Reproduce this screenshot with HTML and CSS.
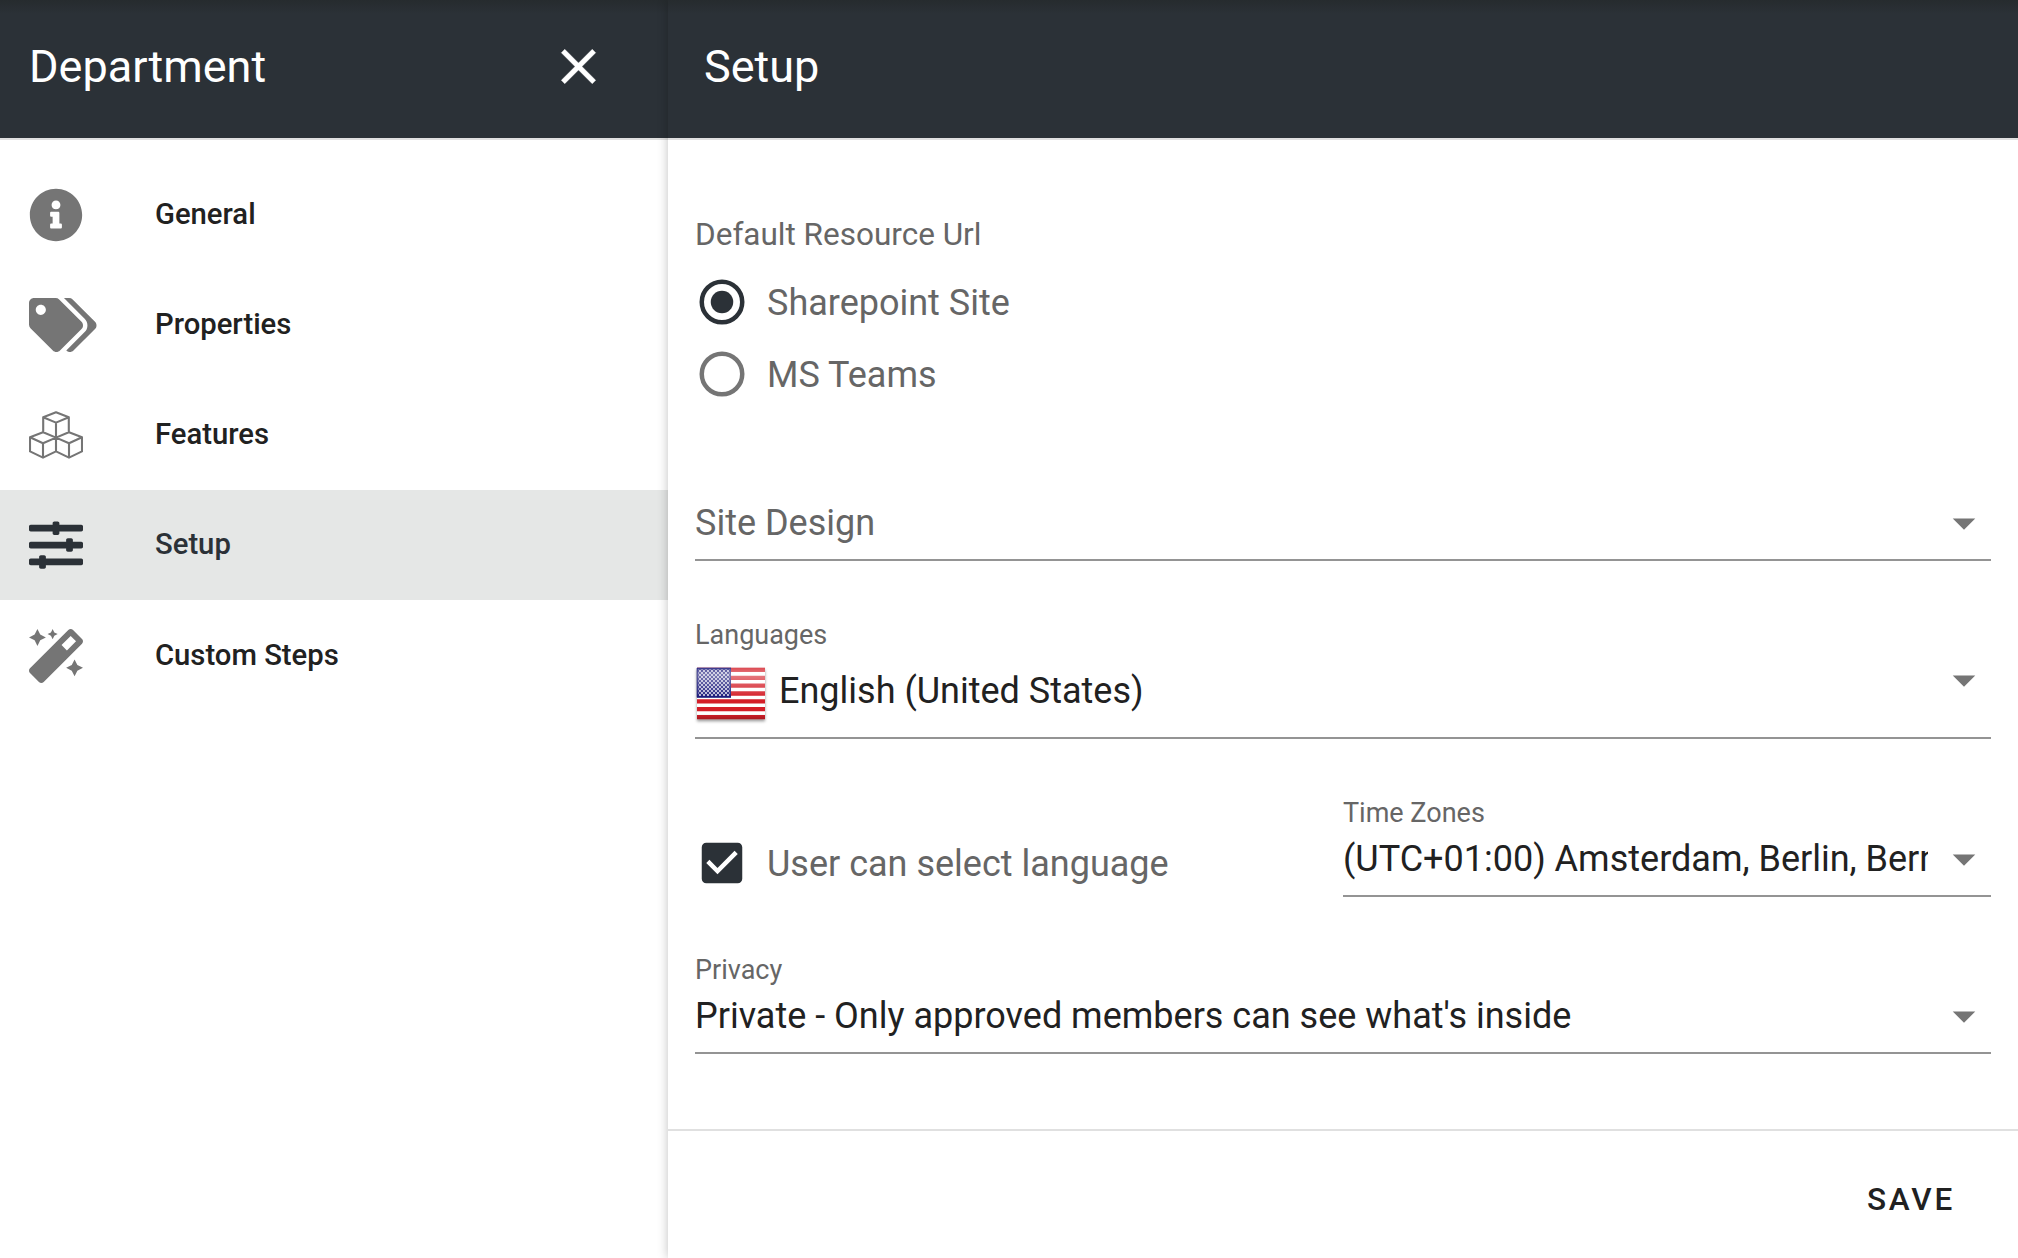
FILE: index.html
```html
<!DOCTYPE html>
<html lang="en">
<head>
<meta charset="utf-8">
<title>Department – Setup</title>
<link rel="stylesheet" href="styles.css">
</head>
<body>
<div class="app">
  <aside class="sidebar">
    <header class="bar">
      <h1 class="title">Department</h1>
      <button class="close" aria-label="Close"><svg viewBox="0 0 24 24"><path d="M19,6.41L17.59,5L12,10.59L6.41,5L5,6.41L10.59,12L5,17.59L6.41,19L12,13.41L17.59,19L19,17.59L13.41,12L19,6.41Z"/></svg></button>
    </header>
    <nav class="menu">
      <a class="item"><span class="icon"><svg viewBox="0 0 512 512" width="54"><path d="M256 8C119.043 8 8 119.083 8 256c0 136.997 111.043 248 248 248s248-111.003 248-248C504 119.083 392.957 8 256 8zm0 110c23.196 0 42 18.804 42 42s-18.804 42-42 42-42-18.804-42-42 18.804-42 42-42zm56 254c0 6.627-5.373 12-12 12h-88c-6.627 0-12-5.373-12-12v-24c0-6.627 5.373-12 12-12h12v-64h-12c-6.627 0-12-5.373-12-12v-24c0-6.627 5.373-12 12-12h64c6.627 0 12 5.373 12 12v100h12c6.627 0 12 5.373 12 12v24z"/></svg></span><span class="name">General</span></a>
      <a class="item"><span class="icon"><svg viewBox="0 0 640 512" width="67.5"><path d="M497.941 225.941L286.059 14.059A48 48 0 0 0 252.118 0H48C21.49 0 0 21.49 0 48v204.118a48 48 0 0 0 14.059 33.941l211.882 211.882c18.744 18.745 49.136 18.746 67.882 0l204.118-204.118c18.745-18.745 18.745-49.137 0-67.882zM112 160c-26.51 0-48-21.49-48-48s21.49-48 48-48 48 21.49 48 48-21.49 48-48 48zm513.941 133.823L421.823 497.941c-18.745 18.745-49.137 18.745-67.882 0l-.36-.36L527.64 323.522c16.999-16.999 26.362-39.6 26.362-63.64s-9.362-46.641-26.362-63.64L331.397 0h48.721a48 48 0 0 1 33.941 14.059l211.882 211.882c18.745 18.745 18.745 49.137 0 67.882z"/></svg></span><span class="name">Properties</span></a>
      <a class="item"><span class="icon"><svg viewBox="0 0 54 54" width="54"><path class="outline" d="M27 4.3L39.8 9.2V24.2L27 29.6L14.2 24.2V9.2ZM14.2 9.2L27 14.6L39.8 9.2M27 14.6V29.6M14 24.2L1 29.2V43.4L14 49.6L27 43.4V29.6M1 29.2L14 35.2L27 29.6L40 35.2L53 29.2M14 35.2V49.6M40 24.2L53 29.2V43.4L40 49.6L27 43.4M40 35.2V49.6"/></svg></span><span class="name">Features</span></a>
      <a class="item active"><span class="icon"><svg viewBox="0 0 512 512" width="54"><path d="M496 384H160v-16c0-8.800-7.200-16-16-16h-32c-8.800 0-16 7.200-16 16v16H16c-8.800 0-16 7.200-16 16v32c0 8.800 7.200 16 16 16h80v16c0 8.800 7.200 16 16 16h32c8.800 0 16-7.200 16-16v-16h336c8.800 0 16-7.200 16-16v-32c0-8.800-7.200-16-16-16zm0-160h-80v-16c0-8.800-7.200-16-16-16h-32c-8.800 0-16 7.200-16 16v16H16c-8.800 0-16 7.200-16 16v32c0 8.800 7.200 16 16 16h336v16c0 8.800 7.200 16 16 16h32c8.800 0 16-7.200 16-16v-16h80c8.800 0 16-7.200 16-16v-32c0-8.800-7.200-16-16-16zm0-160H288V48c0-8.800-7.200-16-16-16h-32c-8.800 0-16 7.200-16 16v16H16C7.200 64 0 71.200 0 80v32c0 8.800 7.200 16 16 16h208v16c0 8.800 7.200 16 16 16h32c8.800 0 16-7.200 16-16v-16h208c8.800 0 16-7.200 16-16V80c0-8.800-7.200-16-16-16z"/></svg></span><span class="name">Setup</span></a>
      <a class="item"><span class="icon"><svg viewBox="0 0 512 512" width="54"><path d="M224 96l16-32 32-16-32-16-16-32-16 32-32 16 32 16 16 32zM80 160l26.660-53.330L160 80l-53.340-26.670L80 0 53.340 53.330 0 80l53.340 26.670L80 160zm352 128l-26.660 53.330L352 368l53.340 26.670L432 448l26.660-53.330L512 368l-53.340-26.670L432 288zm70.620-193.770L417.770 9.380C411.530 3.120 403.340 0 395.150 0c-8.190 0-16.380 3.120-22.630 9.380L9.380 372.520c-12.500 12.500-12.500 32.760 0 45.250l84.850 84.850c6.250 6.250 14.440 9.370 22.620 9.370 8.190 0 16.380-3.120 22.630-9.370l363.140-363.150c12.500-12.480 12.500-32.750 0-45.240zM359.450 203.460l-50.910-50.910 86.600-86.600 50.910 50.910-86.600 86.600z"/></svg></span><span class="name">Custom Steps</span></a>
    </nav>
  </aside>
  <main class="panel">
    <header class="bar bar-panel"><h2 class="title">Setup</h2></header>
    <form class="form">
      <div class="legend">Default Resource Url</div>
      <label class="choice on"><svg viewBox="0 0 24 24"><circle class="ring" cx="12" cy="12" r="9"/><circle cx="12" cy="12" r="5"/></svg><span>Sharepoint Site</span></label>
      <label class="choice"><svg viewBox="0 0 24 24"><circle class="ring" cx="12" cy="12" r="9"/></svg><span>MS Teams</span></label>

      <div class="field field-design">
        <div class="value placeholder"><span class="text">Site Design</span><svg class="arrow" viewBox="0 0 24 24"><path d="M7,10L12,15L17,10H7Z"/></svg></div>
      </div>

      <div class="field field-language">
        <div class="label">Languages</div>
        <div class="value">
          <svg class="flag" viewBox="0 0 72 56">
            <defs>
              <linearGradient id="fade" x1="0" y1="0" x2="0" y2="1"><stop offset="0" stop-color="#fff" stop-opacity=".2"/><stop offset=".12" stop-color="#fff" stop-opacity=".42"/><stop offset=".5" stop-color="#fff" stop-opacity=".1"/><stop offset=".56" stop-color="#fff" stop-opacity="0"/><stop offset=".9" stop-color="#000" stop-opacity="0"/><stop offset="1" stop-color="#000" stop-opacity=".2"/></linearGradient>
              <pattern id="stars" width="4" height="4" patternUnits="userSpaceOnUse"><circle cx="1" cy="1" r=".9" fill="#fff"/><circle cx="3" cy="3" r=".9" fill="#fff"/></pattern>
            </defs>
            <rect x="2" y="2" width="68" height="51" fill="#fff"/>
            <path d="M2 3.960H70M2 11.810H70M2 19.650H70M2 27.500H70M2 35.350H70M2 43.190H70M2 51.040H70" stroke="#d41e28" stroke-width="4.300"/>
            <rect x="2" y="2" width="34" height="29.500" fill="#1d1c7c"/>
            <rect x="3.500" y="3.500" width="31" height="26.500" fill="url(#stars)"/>
            <rect x="2" y="2" width="68" height="51" fill="url(#fade)"/>
            <path d="M36 2H2V31.500H36" fill="none" stroke="#1d1c7c" stroke-opacity=".6"/>
          </svg>
          <span class="text">English (United States)</span><svg class="arrow" viewBox="0 0 24 24"><path d="M7,10L12,15L17,10H7Z"/></svg></div>
      </div>

      <div class="columns">
        <label class="choice check"><svg viewBox="0 0 24 24"><path d="M10,17L5,12L6.41,10.58L10,14.17L17.59,6.58L19,8M19,3H5C3.89,3 3,3.89 3,5V19A2,2 0 0,0 5,21H19A2,2 0 0,0 21,19V5C21,3.89 20.1,3 19,3Z"/></svg><span>User can select language</span></label>
        <div class="field">
          <div class="label">Time Zones</div>
          <div class="value"><span class="text">(UTC+01:00) Amsterdam, Berlin, Bern, Rome, Stockholm, Vienna</span><svg class="arrow" viewBox="0 0 24 24"><path d="M7,10L12,15L17,10H7Z"/></svg></div>
        </div>
      </div>

      <div class="field field-privacy">
        <div class="label">Privacy</div>
        <div class="value"><span class="text">Private - Only approved members can see what's inside</span><svg class="arrow" viewBox="0 0 24 24"><path d="M7,10L12,15L17,10H7Z"/></svg></div>
      </div>
    </form>
    <footer class="actions"><button class="save">SAVE</button></footer>
  </main>
</div>
</body>
</html>
```
FILE: styles.css
```css
* { box-sizing: border-box; }
body {
  margin: 0;
  font-family: Roboto, "Liberation Sans", sans-serif;
  font-size: 36px;
  color: #212121;
  background: #fff;
}
svg { display: block; flex: none; fill: currentColor; }
button { border: 0; padding: 0; background: none; font: inherit; color: inherit; }
.app { display: flex; height: 1258px; overflow: hidden; }
.sidebar {
  flex: none;
  width: 668px;
  background: #fff;
}
.panel {
  flex: 1;
  min-width: 0;
  display: flex;
  flex-direction: column;
  background: #fff;
  box-shadow: 0 0 10px rgba(0, 0, 0, .25);
}
.bar {
  display: flex;
  align-items: center;
  justify-content: space-between;
  height: 140px;
  padding: 0 60px 5px 29px;
  border-bottom: 2px solid #e0e0e0;
  background: linear-gradient(#262b2e, #2b3137 14px) padding-box;
  color: #fff;
}
.bar-panel { padding-left: 36px; }
.title { margin: 0; padding-top: 1px; font-size: 45px; font-weight: 400; line-height: 60px; }
.close svg { width: 59px; height: 59px; margin-bottom: 1px; stroke: currentColor; stroke-width: .15; }

.menu { padding-top: 19px; }
.item {
  display: flex;
  align-items: center;
  height: 110.25px;
  padding: 1px 0 0 29px;
  color: #212121;
}
.icon { width: 126px; color: #757575; }
.outline { fill: none; stroke: currentColor; stroke-width: 2.1; stroke-linejoin: round; }
.name { font-size: 29.25px; font-weight: 500; line-height: 36px; padding-bottom: 2px; }
.active, .active .icon { color: #2b3137; }
.active { background: #e5e7e6; }

.form { flex: 1; padding: 77px 27px 0; }
.legend { height: 49px; font-size: 31.5px; line-height: 36px; color: #666; }
.choice { display: flex; align-items: center; height: 72px; gap: 18px; color: #666; }
.choice span { padding-top: 2px; }
.choice svg { width: 54px; height: 54px; color: #757575; }
.on svg, .check svg { color: #2b3137; }
.ring { fill: none; stroke: currentColor; stroke-width: 2; }

.field { border-bottom: 2px solid #949494; min-width: 0; }
.label { height: 28px; font-size: 27px; line-height: 26px; color: #666; }
.value { display: flex; align-items: center; height: 67px; padding-bottom: 5px; }
.text { flex: 1; min-width: 0; margin-right: 9px; overflow: hidden; white-space: nowrap; line-height: 48px; }
.arrow { width: 54px; height: 54px; color: #757575; }
.placeholder { height: 72px; padding: 0; color: #666; }
.field-design { margin-top: 77px; }
.field-language { margin-top: 60px; }
.field-language .value { height: 88px; }
.field-language .arrow { margin-bottom: 21px; }
.field-language .label { padding-top: 1px; }
.flag { width: 72px; height: 56px; margin: 7px 12px 0 0; filter: drop-shadow(0 2px 1.5px rgba(0, 0, 0, .4)); }
.columns {
  display: grid;
  grid-template-columns: 1fr 1fr;
  align-items: start;
  height: 97px;
  margin-top: 61px;
}
.check { margin-top: 27px; }
.field-privacy { margin-top: 60px; }

.actions {
  display: flex;
  justify-content: flex-end;
  align-items: center;
  height: 129px;
  padding: 10px 63px 0 0;
  border-top: 2px solid #e0e0e0;
}
.save { font-size: 31.5px; font-weight: 500; letter-spacing: 2.81px; line-height: 40px; }
```
